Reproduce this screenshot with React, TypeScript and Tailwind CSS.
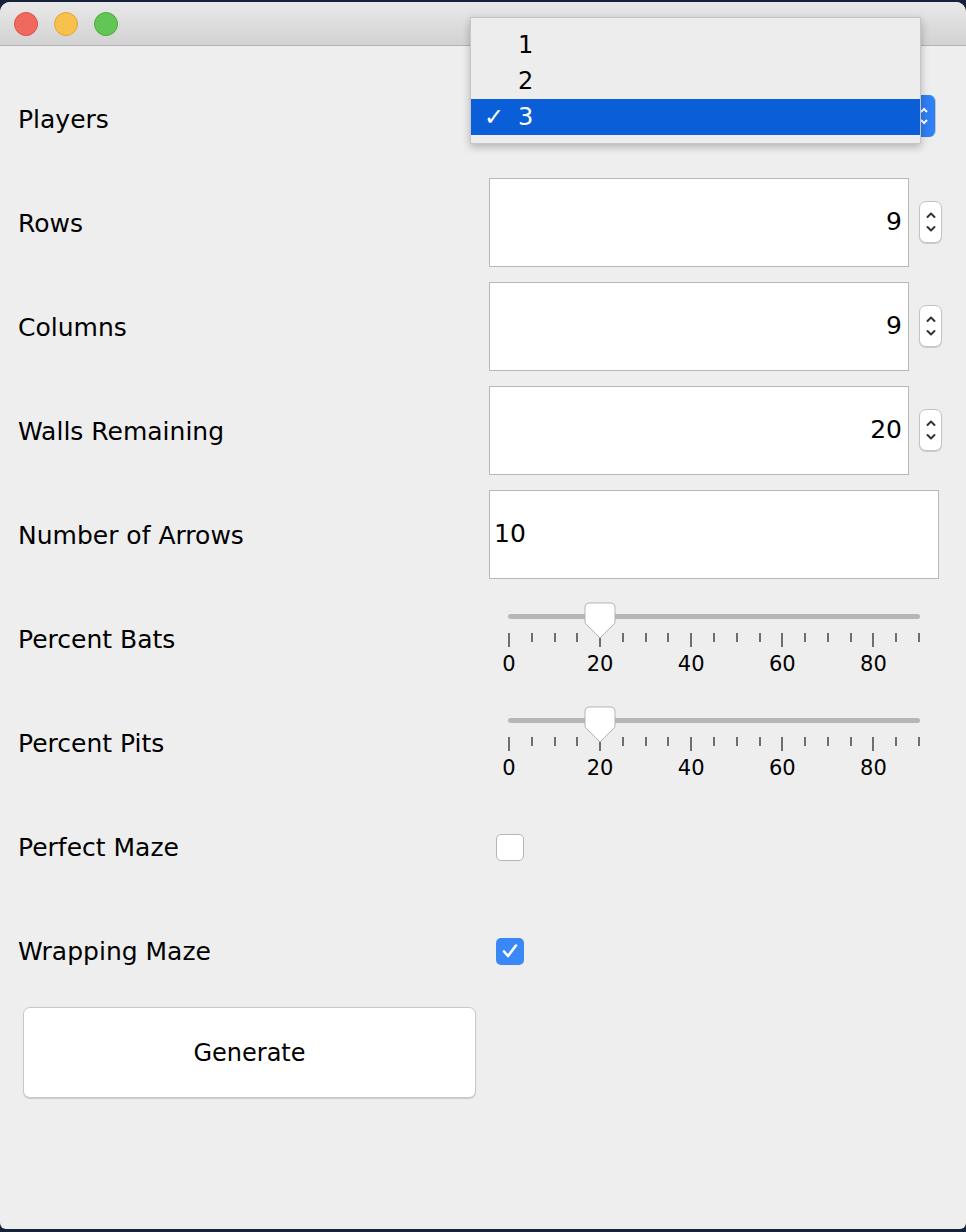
import React from "react";

const font = { fontFamily: '"DejaVu Sans", "Open Sans", sans-serif' };

function Label({ text }: { text: string }) {
    return <div className="w-[489px] shrink-0 pl-[18px] pt-[2px] text-[25px] text-black">{text}</div>;
}

function Spinner() {
    return (
        <div className="ml-[10px] flex h-[42px] w-[23px] flex-col items-center justify-center rounded-[7px] border border-[#c4c4c4] bg-white shadow-[0_1px_1px_rgba(0,0,0,0.15)]">
            <svg width="12" height="30" viewBox="0 0 12 30" fill="none" stroke="#333" strokeWidth="2" strokeLinecap="round" strokeLinejoin="round">
                <path d="M2.5 10 L6 6.5 L9.5 10" />
                <path d="M2.5 20 L6 23.5 L9.5 20" />
            </svg>
        </div>
    );
}

function NumberField({ value }: { value: string }) {
    return (
        <div className="-mt-[2px] flex items-center">
            <div className="flex h-[89px] w-[420px] items-center justify-end border border-[#b9b9b9] bg-white pr-[6px] text-[25px]">
                {value}
            </div>
            <Spinner />
        </div>
    );
}

function Slider({ value }: { value: number }) {
    const max = 90;
    const ticks = Array.from({ length: 19 }, (_, i) => i * 5);
    const labels = [0, 20, 40, 60, 80];
    return (
        <div className="relative ml-[19px] h-[104px] w-[412px]">
            <div className="absolute left-0 right-0 top-[27px] h-[5px] rounded-full bg-[#b7b7b7]" />
            <div className="absolute top-[46px] left-0 right-0 h-[14px]">
                {ticks.map((t) => (
                    <div
                        key={t}
                        className="absolute top-0 w-[2px] bg-[#6e6e6e]"
                        style={{ left: `${(t / max) * 410}px`, height: t % 20 === 0 ? 14 : 9 }}
                    />
                ))}
            </div>
            <div className="absolute top-[66px] left-0 right-0">
                {labels.map((l) => (
                    <div
                        key={l}
                        className="absolute w-[40px] -translate-x-1/2 text-center text-[21px] leading-[22px] text-black"
                        style={{ left: `${(l / max) * 410 + 1}px` }}
                    >
                        {l}
                    </div>
                ))}
            </div>
            <svg
                className="absolute top-[15px]"
                style={{ left: `${(value / max) * 410 - 15}px` }}
                width="32"
                height="38"
                viewBox="0 0 32 38"
            >
                <path
                    d="M5 1 H27 Q31 1 31 5 V21 L16 36 L1 21 V5 Q1 1 5 1 Z"
                    fill="#fff"
                    stroke="#b3b3b3"
                    strokeWidth="1"
                />
            </svg>
        </div>
    );
}

function Row({ label, children }: { label: string; children?: React.ReactNode }) {
    return (
        <div className="flex h-[104px] items-center">
            <Label text={label} />
            <div className="flex items-center">{children}</div>
        </div>
    );
}

export default function App() {
    return (
        <div className="h-[1232px] w-[966px] bg-[#16223a] pt-[2px]" style={font}>
            <div className="relative flex h-[1227px] flex-col overflow-hidden rounded-t-[10px] rounded-b-[6px] bg-[#eeeeee]">
                {/* title bar */}
                <div className="flex h-[44px] items-center gap-[16px] border-b border-[#b3b3b3] bg-gradient-to-b from-[#e9e9e9] to-[#d2d2d2] pl-[14px]">
                    <span className="h-[24px] w-[24px] rounded-full border border-[#dd5249] bg-[#f0695e]" />
                    <span className="h-[24px] w-[24px] rounded-full border border-[#e0a52f] bg-[#f8c04d]" />
                    <span className="h-[24px] w-[24px] rounded-full border border-[#4ea93e] bg-[#62c654]" />
                </div>

                <div className="pt-[21px]">
                    <Row label="Players">
                        <div className="-mt-[6px] flex h-[42px] w-[447px] items-center justify-end rounded-[6px] border border-[#c4c4c4] bg-white">
                            <div className="flex h-[42px] w-[22px] items-center justify-center rounded-r-[6px] bg-[#2f7ff5]">
                                <svg width="10" height="26" viewBox="0 0 10 26" fill="none" stroke="#fff" strokeWidth="2">
                                    <path d="M2 9 L5 6 L8 9" />
                                    <path d="M2 17 L5 20 L8 17" />
                                </svg>
                            </div>
                        </div>
                    </Row>
                    <Row label="Rows">
                        <NumberField value="9" />
                    </Row>
                    <Row label="Columns">
                        <NumberField value="9" />
                    </Row>
                    <Row label="Walls Remaining">
                        <NumberField value="20" />
                    </Row>
                    <Row label="Number of Arrows">
                        <div className="-mt-[2px] flex h-[89px] w-[450px] items-center border border-[#b9b9b9] bg-white pl-[4px] text-[25px]">
                            10
                        </div>
                    </Row>
                    <div className="flex h-[104px] items-center">
                        <Label text="Percent Bats" />
                        <Slider value={20} />
                    </div>
                    <div className="flex h-[104px] items-center">
                        <Label text="Percent Pits" />
                        <Slider value={20} />
                    </div>
                    <Row label="Perfect Maze">
                        <div className="ml-[7px] h-[27px] w-[28px] rounded-[5px] border border-[#b5b5b5] bg-white" />
                    </Row>
                    <Row label="Wrapping Maze">
                        <div className="ml-[7px] flex h-[27px] w-[28px] items-center justify-center rounded-[5px] bg-[#3a87f8]">
                            <svg width="18" height="16" viewBox="0 0 18 16" fill="none" stroke="#fff" strokeWidth="2.6" strokeLinecap="round" strokeLinejoin="round">
                                <path d="M3 8.5 L7 13 L15 2.5" />
                            </svg>
                        </div>
                    </Row>
                    <div className="pl-[23px] pt-[4px]">
                        <button className="flex h-[91px] w-[453px] items-center justify-center rounded-[7px] border border-[#c8c8c8] bg-white text-[24px] text-black shadow-[0_1px_1px_rgba(0,0,0,0.15)]">
                            Generate
                        </button>
                    </div>
                </div>
            </div>

            {/* open combo popup */}
            <div className="absolute left-[470px] top-[17px] w-[451px] border border-[#c6c6c6] bg-[#ededed] pb-[8px] pt-[9px] text-[24px] shadow-[0_3px_8px_rgba(0,0,0,0.25)]">
                <div className="flex h-[36px] items-center pl-[47px] text-black">1</div>
                <div className="flex h-[36px] items-center pl-[47px] text-black">2</div>
                <div className="flex h-[36px] items-center bg-[#0a5fd9] text-white">
                    <span className="w-[47px] pl-[13px] font-bold">✓</span>
                    <span>3</span>
                </div>
            </div>
        </div>
    );
}
